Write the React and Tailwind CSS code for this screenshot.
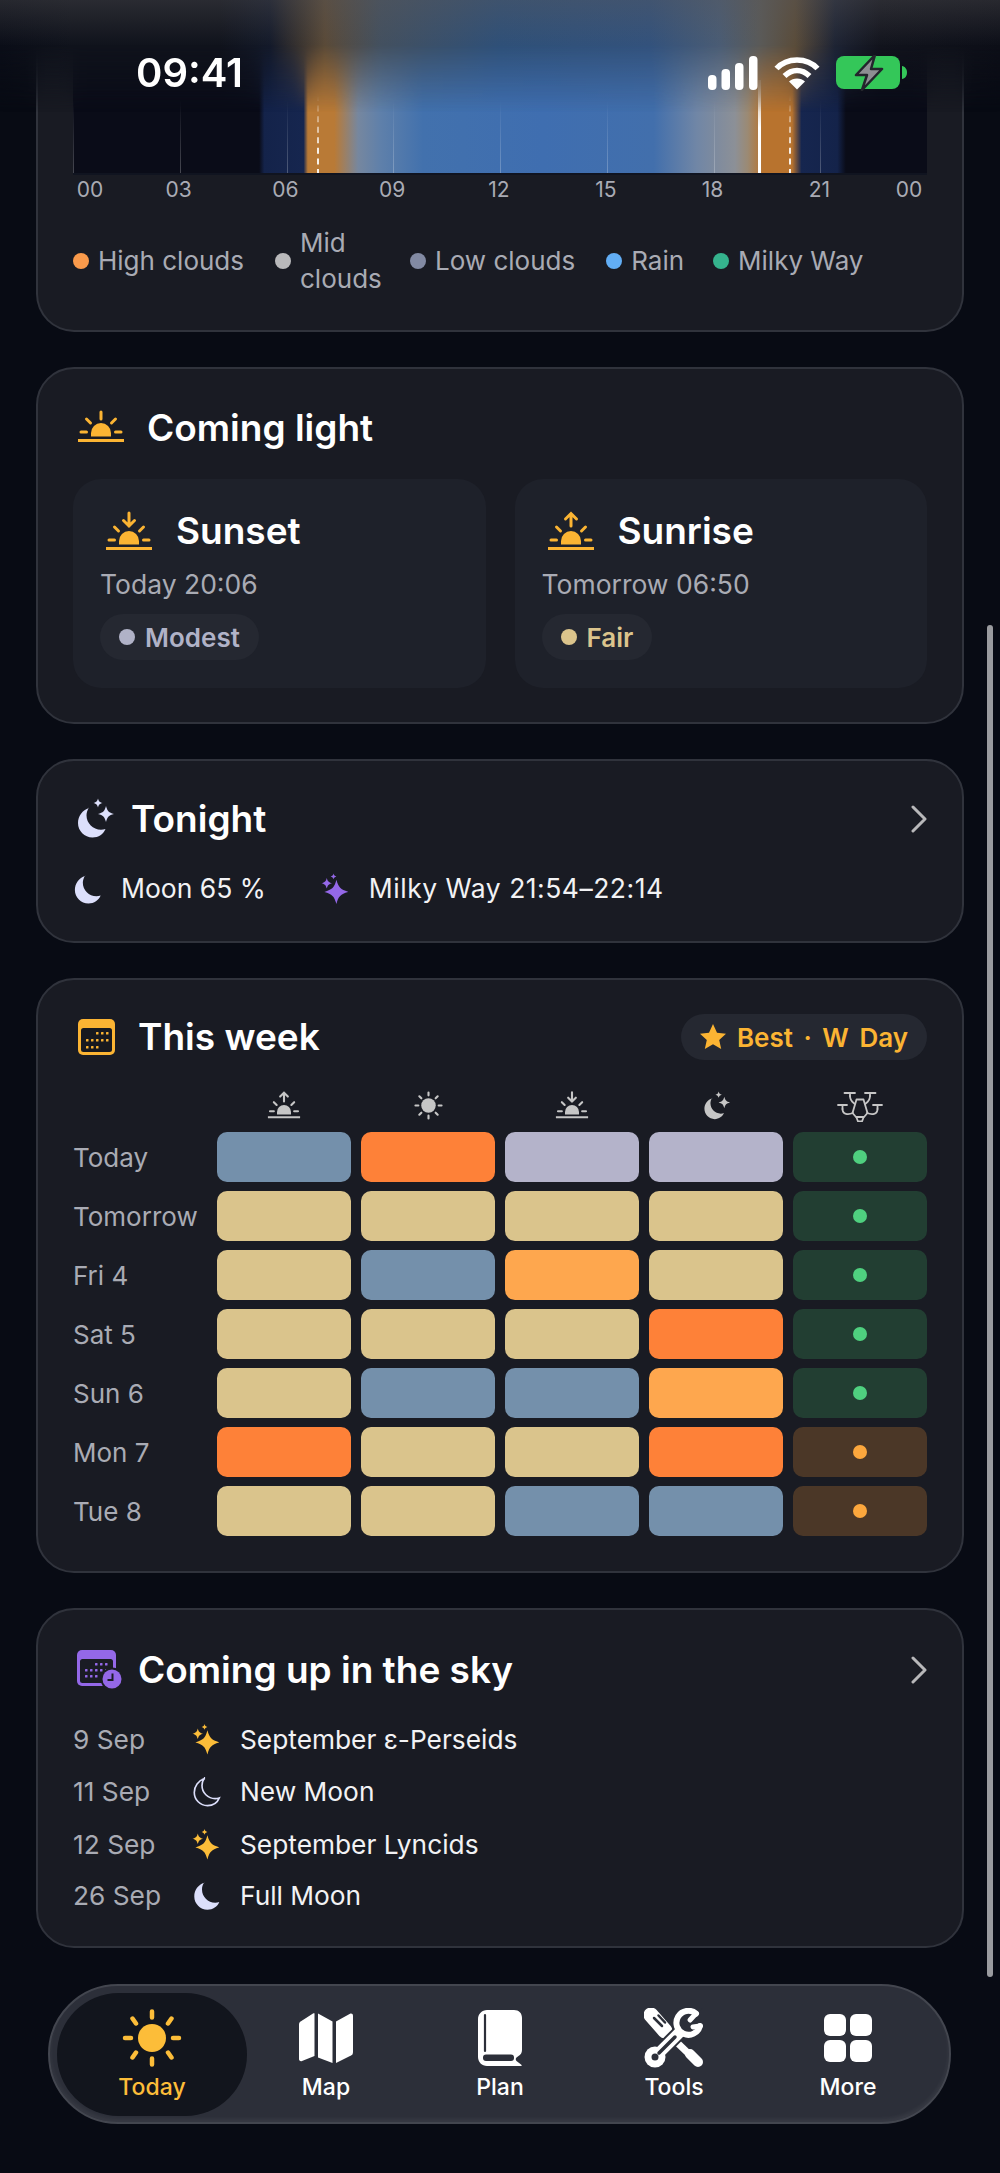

const Dome = ({ kind = "plain", color = "#fbb433", className = "" }) => (
  <svg viewBox="0 0 48 40" className={className} fill="none" stroke={color} strokeLinecap="round" strokeWidth="3">
    <path d="M1 37.500H47" strokeLinecap="butt" />
    <path d="M14 33.500v-3.500a10 10 0 0 1 20 0v3.500z" fill={color} stroke="none" />
    <path d="M4 29H9.500M38.500 29H44M9.500 16l4 4M38.500 16l-4 4" />
    {kind === "plain" && <path d="M24 9V16" />}
    {kind === "down" && <path d="M24 2V15M18.500 9.500L24 15l5.500-5.500" />}
    {kind === "up" && <path d="M24 15V2.500M18.500 8L24 2.500 29.500 8" />}
  </svg>
);

const Star4 = ({ cx, cy, r, fill }) => (
  <path fill={fill} d={`M${cx} ${cy - r}C${cx + r * 0.18} ${cy - r * 0.35} ${cx + r * 0.35} ${cy - r * 0.18} ${cx + r} ${cy}C${cx + r * 0.35} ${cy + r * 0.18} ${cx + r * 0.18} ${cy + r * 0.35} ${cx} ${cy + r}C${cx - r * 0.18} ${cy + r * 0.35} ${cx - r * 0.35} ${cy + r * 0.18} ${cx - r} ${cy}C${cx - r * 0.35} ${cy - r * 0.18} ${cx - r * 0.18} ${cy - r * 0.35} ${cx} ${cy - r}Z`} />
);

const Sparkles = ({ fill, className = "" }) => (
  <svg viewBox="0 0 28 32" className={className}>
    <Star4 cx={16} cy={19} r={12.5} fill={fill} />
    <Star4 cx={6} cy={10} r={5.5} fill={fill} />
    <Star4 cx={13} cy={3} r={3} fill={fill} />
  </svg>
);

const MOON = "M13 2C6.500 4 2 10 2 17c0 8 6.500 14.500 14.500 14.500 6 0 11-3.500 13-8.500-1.500.5-3 .8-4.500.8-8 0-14.500-6.500-14.500-14.500 0-2.500.8-5.300 2.500-7.800Z";

const MoonIcon = ({ className = "", fill = "#dcdffb" }) => (
  <svg viewBox="0 0 32 33" className={className}><path d={MOON} fill={fill} /></svg>
);

const MoonOutline = ({ className = "" }) => (
  <svg viewBox="0 0 32 33" className={className}><path d={MOON} fill="none" stroke="#dcdffb" strokeWidth="1.800" /></svg>
);

const MoonStars = ({ fill, className = "" }) => (
  <svg viewBox="0 0 38 42" className={className}>
    <g transform="translate(0 8)"><path d={MOON} fill={fill} /></g>
    <Star4 cx={30} cy={16} r={8} fill={fill} />
    <Star4 cx={22} cy={5} r={4.500} fill={fill} />
  </svg>
);

const SmallSun = ({ className = "" }) => (
  <svg viewBox="0 0 30 30" className={className} stroke="#c6c6c6" strokeWidth="2.200" strokeLinecap="round">
    <circle cx="15" cy="15" r="7.500" fill="#c6c6c6" stroke="none" />
    <path d="M15 1.500V4.500M15 25.500V28.500M1.500 15H4.500M25.500 15H28.500M5.500 5.500L7.600 7.600M24.500 5.500L22.400 7.600M5.500 24.500L7.600 22.400M24.500 24.500L22.400 22.400" />
  </svg>
);

const Drone = ({ className = "" }) => (
  <svg viewBox="0 0 46 31" className={className} fill="none" stroke="#c6c6c6" strokeWidth="1.800" strokeLinecap="round" strokeLinejoin="round">
    <path d="M7.500 2H18M28 2H38.500M13 2V5M33 2V5M1 14H10M36 14H45M5.500 14V18M40.500 14V18" />
    <path d="M13 5C13 10 15.500 11 18 13M33 5C33 10 30.500 11 28 13" />
    <path d="M5.500 18C5.500 23.500 11 24 16 22M40.500 18C40.500 23.500 35 24 30 22" />
    <path d="M19.500 8.500H26.500L30.500 22 27 26H19L15.500 22Z" />
    <path d="M19.500 26.500L21 30.500H25L26.500 26.500" />
  </svg>
);

const CalendarAmber = ({ className = "" }) => (
  <svg viewBox="0 0 37 36" className={className}>
    <rect width="37" height="36" rx="5" fill="#fbb433" />
    <rect x="3" y="9" width="31" height="24" rx="2.500" fill="#17191f" />
    <g fill="#fbb433">
      {[12, 19, 26].flatMap((y, r) => [8, 13, 18, 23, 28].filter((x, i) => !(r === 0 && i < 2) && !(r === 2 && i > 2)).map((x) => <rect key={`${x}${y}`} x={x} y={y + 1} width="2.500" height="2.500" rx="0.500" />))}
    </g>
  </svg>
);

const CalendarClock = ({ className = "" }) => (
  <svg viewBox="0 0 46 40" className={className}>
    <rect width="39" height="36" rx="5" fill="#9468e8" />
    <rect x="3" y="9" width="33" height="24" rx="2.500" fill="#1a1c24" />
    <g fill="#9468e8">
      {[13, 19, 25].flatMap((y, r) => [8, 13, 18, 23, 28].filter((x, i) => !(r === 0 && i < 2) && !(r === 2 && i > 2)).map((x) => <rect key={`${x}${y}`} x={x} y={y} width="2.500" height="2.500" rx="0.500" />))}
    </g>
    <circle cx="35" cy="29" r="11.500" fill="#1a1c24" />
    <circle cx="35" cy="29" r="9.500" fill="#9468e8" />
    <path d="M35.500 23.500V30H30.500" fill="none" stroke="#1a1c24" strokeWidth="2" />
  </svg>
);

const Chevron = () => (
  <svg viewBox="0 0 16 28" className="h-[28px] w-[16px]" fill="none" stroke="#b8b8ba" strokeWidth="3" strokeLinecap="round" strokeLinejoin="round">
    <path d="M2 2L14 14 2 26" />
  </svg>
);

const NavSun = () => (
  <svg viewBox="0 0 60 58" className="h-[58px] w-[60px]" stroke="#fcbd39" strokeWidth="4.500" strokeLinecap="round">
    <circle cx="30" cy="29" r="14" fill="#fcbd39" stroke="none" />
    <path d="M30 2.500V8.500M30 49.500V55.500M3 29H9M51 29H57M10.500 9.500L14 14.500M49.500 9.500L46 14.500M10.500 48.500L14 43.500M49.500 48.500L46 43.500" />
  </svg>
);
const NavMap = () => (
  <svg viewBox="0 0 54 50" className="h-[50px] w-[54px]" fill="#fff">
    <path d="M15.500 .5V43L3 48C1.300 48.600 0 47.600 0 46V11.500C0 10 .8 9 2 8.300L14 .6C14.600 .2 15.500 0 15.500 .5Z" />
    <path d="M19 .5L33.500 8.500V50L19 44.500Z" />
    <path d="M37 8.500L51 .8C52.500 0 54 1 54 2.500V39C54 40.800 53.200 42 52 42.600L37 50Z" />
  </svg>
);
const NavBook = () => (
  <svg viewBox="0 0 44 56" className="h-[56px] w-[44px]">
    <path fill="#fff" d="M9 0H36C41 0 44 3 44 8V40C44 43 42.500 45 40.500 46L38.500 47.500C37.500 48.500 37.500 50 38.500 51L43 54.500C44.200 55.500 43.800 56 42.500 56H9C4 56 0 52 0 47V9C0 4 4 0 9 0Z" />
    <path d="M7 5V41" stroke="#2c2f39" strokeWidth="2.200" strokeLinecap="round" />
    <rect x="5" y="44.500" width="31" height="6.500" rx="3" fill="#2c2f39" />
  </svg>
);
const NavTools = () => (
  <svg viewBox="0 0 60 60" className="h-[60px] w-[60px]" fill="none" strokeLinejoin="round">
    <path d="M7 7L21 23" stroke="#fff" strokeWidth="15" strokeLinecap="round" />
    <path d="M21 23L46 47" stroke="#fff" strokeWidth="7" />
    <path d="M46 46L54 54" stroke="#fff" strokeWidth="10" strokeLinecap="round" />
    <path d="M10 10L18 18M14.500 7.500L21 14.500" stroke="#2c2f39" strokeWidth="2.500" strokeLinecap="round" />
    <path d="M13 47L36 24" stroke="#2c2f39" strokeWidth="15" />
    <path d="M54.500 4.500A12.500 12.500 0 1 0 57.500 18" stroke="#2c2f39" strokeWidth="11" />
    <circle cx="11" cy="49" r="13" fill="#2c2f39" />
    <path d="M13 47L36 24" stroke="#fff" strokeWidth="11" />
    <circle cx="11" cy="49" r="10.500" fill="#fff" />
    <path d="M52 5.500A12 12 0 1 0 56 18" stroke="#fff" strokeWidth="6" strokeLinecap="round" />
    <path d="M52 5.500L46 12M56 18L49 19" stroke="#fff" strokeWidth="5" strokeLinecap="round" />
    <circle cx="11" cy="49" r="3.500" fill="#2c2f39" />
    <path d="M15 45L31 29" stroke="#2c2f39" strokeWidth="3.500" strokeLinecap="round" />
  </svg>
);
const NavMore = () => (
  <div className="grid h-[48px] w-[48px] grid-cols-2 grid-rows-2 gap-[4px]">
    <div className="rounded-[6px] bg-white" /><div className="rounded-[6px] bg-white" />
    <div className="rounded-[6px] bg-white" /><div className="rounded-[6px] bg-white" />
  </div>
);

const StatusIcons = () => (
  <div className="flex items-center">
    <svg viewBox="0 0 50 34" className="h-[34px] w-[50px]" fill="#fff">
      <rect x="0" y="19" width="8.500" height="15" rx="4" />
      <rect x="13.500" y="13" width="8.500" height="21" rx="4" />
      <rect x="27" y="7" width="8.500" height="27" rx="4" />
      <rect x="41" y="0" width="8.500" height="34" rx="4" />
    </svg>
    <svg viewBox="0 0 46 34" className="ml-[16px] h-[34px] w-[46px]" fill="none" stroke="#fff" strokeWidth="5.500">
      <path d="M2.500 12.500C13 1 33 1 43.500 12.500" />
      <path d="M10.500 20C18 12.500 28 12.500 35.500 20" />
      <path d="M23 33.500L15 25.500C19 21.500 27 21.500 31 25.500Z" fill="#fff" stroke="none" />
    </svg>
    <svg viewBox="0 0 72 36" className="ml-[16px] h-[36px] w-[72px]">
      <rect x="0" y="1" width="64" height="33" rx="8" fill="#34c759" />
      <path d="M66 11C69 11.500 71 14 71 17.500S69 23.500 66 24Z" fill="#34c759" />
      <path d="M39 0L20 20H31L26 35 46 14H35Z" fill="#8e8e93" stroke="#23252c" strokeWidth="2.500" strokeLinejoin="round" />
    </svg>
  </div>
);

const Card = ({ className = "", children }) => (
  <section className={`rounded-[38px] border-2 border-[#30333c] bg-[#191b23] ${className}`}>{children}</section>
);

const legend = [
  ["#f99a4b", "High clouds"],
  ["#b9b9bb", "Mid clouds"],
  ["#828aa3", "Low clouds"],
  ["#62aef5", "Rain"],
  ["#35b38d", "Milky Way"],
];

const hours = ["03", "06", "09", "12", "15", "18", "21"];
const gridLines = ["left-0", "left-[12.500%]", "left-[25%]", "left-[37.500%]", "left-[50%]", "left-[62.500%]", "left-[75%]", "left-[87.500%]"];

const Chart = () => (
  <div className="relative h-[175px] bg-[linear-gradient(90deg,#0a0c18_0%,#0a0c18_21.800%,#14234a_22.400%,#16264f_27%,#b97a36_27.500%,#b97a36_30.600%,#76879f_33.400%,#5f80aa_36%,#4271ad_41%,#3f6eb0_55%,#426fac_68%,#7086a6_73%,#8c9097_77.500%,#9b8a74_79%,#b8732e_80.800%,#b8732e_84.200%,#16264f_85.300%,#14234a_89.500%,#0a0c18_90.500%,#0a0c18_100%)]">
    {gridLines.map((c) => (
      <div key={c} className={`absolute bottom-0 top-[100px] w-px bg-gradient-to-b from-transparent to-white/25 ${c}`} />
    ))}
    <div className="absolute bottom-0 left-[28.600%] top-[95px] w-0 border-l-2 border-dashed border-white/90 [mask-image:linear-gradient(180deg,transparent,#000_70%)]" />
    <div className="absolute bottom-0 left-[83.800%] top-[95px] w-0 border-l-2 border-dashed border-white/90 [mask-image:linear-gradient(180deg,transparent,#000_70%)]" />
    <div className="absolute bottom-0 left-[80.200%] top-[80px] w-[3px] bg-gradient-to-b from-white/30 via-white to-white" />
    <div className="absolute bottom-0 left-0 right-0 h-[2px] bg-[#101420]" />
  </div>
);

const cellColors = {
  b: "bg-[#7490ab]",
  o: "bg-[#fe8138]",
  l: "bg-[#b4b3ca]",
  t: "bg-[#dac48c]",
  a: "bg-[#fea74e]",
};

const rows = [
  ["Today", ["b", "o", "l", "l"], "g"],
  ["Tomorrow", ["t", "t", "t", "t"], "g"],
  ["Fri 4", ["t", "b", "a", "t"], "g"],
  ["Sat 5", ["t", "t", "t", "o"], "g"],
  ["Sun 6", ["t", "b", "b", "a"], "g"],
  ["Mon 7", ["o", "t", "t", "o"], "y"],
  ["Tue 8", ["t", "t", "b", "b"], "y"],
];

const events = [
  ["9 Sep", <Sparkles fill="#fcbd39" className="h-[31px] w-[27px]" />, "September ε-Perseids", "h-[51px]"],
  ["11 Sep", <MoonOutline className="h-[30px] w-[30px]" />, "New Moon", "h-[54px]"],
  ["12 Sep", <Sparkles fill="#fcbd39" className="h-[31px] w-[27px]" />, "September Lyncids", "h-[51px]"],
  ["26 Sep", <MoonIcon className="h-[30px] w-[30px]" />, "Full Moon", "h-[51px]"],
];

const LightBox = ({ kind, title, time, pillColor, pillText, pillClass }) => (
  <div className="h-[209px] rounded-[28px] bg-[#1e212a] pl-[27px] pt-[30px]">
    <div className="flex h-[44px] items-center gap-[23px] pl-[5px]">
      <Dome kind={kind} className="h-[40px] w-[48px]" />
      <span className="text-[37px] font-[580] text-white">{title}</span>
    </div>
    <div className="mt-[13px] text-[26.500px] leading-[36px] text-[#a9abb4]">{time}</div>
    <div className={`mt-[12px] inline-flex h-[46px] items-center gap-[10px] rounded-full bg-[#252831] px-[19px] text-[26px] font-semibold ${pillClass}`}>
      <span className={`h-[16px] w-[16px] rounded-full ${pillColor}`} />
      {pillText}
    </div>
  </div>
);

const NavItem = ({ icon, label }) => (
  <div className="flex h-[123px] w-[174px] flex-col items-center pt-[14px]">
    <div className="flex h-[62px] items-center justify-center">{icon}</div>
    <span className="mt-[3px] text-[23px] font-medium leading-[30px] text-white">{label}</span>
  </div>
);

export default function App() {
  return (
    <div className="relative h-[2173px] w-[1000px] overflow-hidden bg-[#080b14] font-['Inter',sans-serif] text-white">
      <div className="flex flex-col gap-[35px] px-[36px]">
        <Card className="h-[332px] rounded-t-none border-t-0 px-[35px]">
          <Chart />
          <div className="mt-[1px] flex h-[28px] items-center justify-between text-[21px] leading-[28px] text-[#a9abb4]">
            <span className="w-[34px] text-center">00</span>
            <div className="flex">
              {hours.map((h) => (
                <span key={h} className="w-[106.800px] text-center">{h}</span>
              ))}
            </div>
            <span className="w-[36px] text-center">00</span>
          </div>
          <div className="mt-[21px] flex h-[72px] items-center text-[26px] leading-[36px] text-[#a9abb4]">
            {legend.map(([c, t], i) => (
              <div key={t} className={`flex items-center gap-[9px] ${i === 1 ? "ml-[31px] w-[106px]" : i === 0 ? "" : i === 3 ? "ml-[31px]" : "ml-[29px]"}`}>
                <span className="h-[16px] w-[16px] shrink-0 rounded-full" style={{ backgroundColor: c }} />
                <span className={i === 1 ? "w-[70px]" : "whitespace-nowrap"}>{t}</span>
              </div>
            ))}
          </div>
        </Card>

        <Card className="h-[357px] px-[35px]">
          <div className="flex h-[110px] items-center pt-[7px]">
            <div className="ml-[4px] flex h-[31px] w-[48px] items-end"><Dome kind="plain" className="h-[40px] w-[48px] shrink-0" /></div>
            <h2 className="ml-[22px] text-[37px] font-[580]">Coming light</h2>
          </div>
          <div className="grid grid-cols-2 gap-[29px]">
            <LightBox kind="down" title="Sunset" time="Today 20:06" pillColor="bg-[#b0b2c7]" pillText="Modest" pillClass="text-[#b0b2c7]" />
            <LightBox kind="up" title="Sunrise" time="Tomorrow 06:50" pillColor="bg-[#dbc48c]" pillText="Fair" pillClass="text-[#dbc48c]" />
          </div>
        </Card>

        <Card className="h-[184px] px-[35px]">
          <div className="flex h-[110px] items-center justify-between pt-[5px]">
            <div className="flex items-center gap-[17px]">
              <MoonStars fill="#dcdffb" className="ml-[3px] h-[42px] w-[38px]" />
              <h2 className="text-[37px] font-[580]">Tonight</h2>
            </div>
            <Chevron />
          </div>
          <div className="flex h-[36px] items-center text-[26.500px] text-[#f2f2f4]">
            <MoonIcon className="h-[31px] w-[30px]" />
            <span className="ml-[18px]">Moon 65 %</span>
            <Sparkles fill="#9468e8" className="ml-[55px] h-[34px] w-[27px]" />
            <span className="ml-[21px] tracking-[0.500px]">Milky Way 21:54–22:14</span>
          </div>
        </Card>

        <Card className="h-[595px] px-[35px]">
          <div className="flex h-[111px] items-center justify-between pt-[3px]">
            <div className="flex items-center gap-[23px]">
              <CalendarAmber className="ml-[5px] h-[36px] w-[37px]" />
              <h2 className="text-[37px] font-[580]">This week</h2>
            </div>
            <div className="flex h-[46px] items-center gap-[11px] rounded-full bg-[#252831] px-[19px] text-[26px] font-semibold text-[#fbb433] [word-spacing:4px]">
              <svg viewBox="0 0 26 26" className="h-[26px] w-[26px]" fill="#fbb433"><path d="M13 0l4 8.800 9 .9-6.800 6.200 2 9.100L13 20.300 4.800 25l2-9.100L0 9.700l9-.9z" /></svg>
              <span>Best · W Day</span>
            </div>
          </div>
          <div className="grid grid-cols-[134px_repeat(5,134px)] gap-x-[10px] gap-y-[9px]">
            <div className="h-[32px]" />
            <div className="flex h-[32px] items-start justify-center"><Dome kind="up" color="#c6c6c6" className="h-[28px] w-[34px]" /></div>
            <div className="flex h-[32px] items-start justify-center"><SmallSun className="h-[29px] w-[29px]" /></div>
            <div className="flex h-[32px] items-start justify-center"><Dome kind="down" color="#c6c6c6" className="h-[28px] w-[34px]" /></div>
            <div className="flex h-[32px] items-start justify-center"><MoonStars fill="#c6c6c6" className="h-[30px] w-[27px]" /></div>
            <div className="flex h-[32px] items-start justify-center"><Drone className="h-[31px] w-[46px]" /></div>
            {rows.map(([label, cells, status]) => (
              <div key={label} className="contents">
                <div className="flex h-[50px] items-center whitespace-nowrap text-[26px] text-[#a9abb4]">{label}</div>
                {cells.map((c, i) => (
                  <div key={i} className={`h-[50px] rounded-[10px] ${cellColors[c]}`} />
                ))}
                <div className={`flex h-[50px] items-center justify-center rounded-[10px] ${status === "g" ? "bg-[#223e32]" : "bg-[#4b3727]"}`}>
                  <span className={`h-[14px] w-[14px] rounded-full ${status === "g" ? "bg-[#4fd07f]" : "bg-[#fca73d]"}`} />
                </div>
              </div>
            ))}
          </div>
        </Card>

        <Card className="h-[340px] px-[35px]">
          <div className="flex h-[104px] items-center justify-between pt-[16px]">
            <div className="flex items-center gap-[15px]">
              <CalendarClock className="ml-[4px] h-[40px] w-[46px]" />
              <h2 className="text-[37px] font-[580]">Coming up in the sky</h2>
            </div>
            <Chevron />
          </div>
          <div className="flex flex-col">
            {events.map(([d, icon, t, h]) => (
              <div key={t} className={`flex items-center text-[26.300px] ${h}`}>
                <span className="w-[119px] text-[#a9abb4]">{d}</span>
                <span className="flex w-[48px] justify-start">{icon}</span>
                <span className="text-[#f2f2f4]">{t}</span>
              </div>
            ))}
          </div>
        </Card>
      </div>

      {/* status bar blur over the scrolled content */}
      <div className="absolute left-0 right-0 top-0 h-[112px] bg-[linear-gradient(180deg,rgba(90,88,90,0.35),rgba(90,88,90,0)_45px),linear-gradient(90deg,#0b0e18_0%,#10131c_7%,#10131c_22%,#141a2a_27%,#3a3430_30%,#5a4a38_32.500%,#43505f_38%,#2f5078_50%,#33527c_65%,#4a5c74_72%,#5a5a58_76%,#5a4c3a_79.500%,#1e2434_83.500%,#12141d_88%,#0d0f18_100%)] backdrop-blur-[8px] [mask-image:linear-gradient(180deg,#000_40%,transparent_100%)]" />
      <div className="absolute left-[136px] right-[92px] top-[53px] flex h-[40px] items-center justify-between">
        <span className="text-[40px] font-semibold leading-[40px] text-white">09:41</span>
        <StatusIcons />
      </div>

      {/* overlay scrollbar */}
      <div className="absolute left-[987px] top-[625px] h-[1352px] w-[6px] rounded-full bg-[#9a9b9f]" />

      {/* floating tab bar */}
      <nav className="absolute left-[48px] top-[1984px] flex h-[140px] w-[903px] items-center rounded-[70px] border-2 border-[#43464f] bg-[#2c2f39] pl-[7px] shadow-[inset_0_-3px_4px_rgba(255,255,255,0.06)]">
        <div className="flex h-[123px] w-[190px] flex-col items-center rounded-[62px] bg-[#12151d] pt-[14px]">
          <div className="flex h-[62px] items-center justify-center"><NavSun /></div>
          <span className="mt-[3px] text-[23px] font-medium leading-[30px] text-[#fcbd39]">Today</span>
        </div>
        <div className="-ml-[8px] flex">
          <NavItem icon={<NavMap />} label="Map" />
          <NavItem icon={<NavBook />} label="Plan" />
          <NavItem icon={<NavTools />} label="Tools" />
          <NavItem icon={<NavMore />} label="More" />
        </div>
      </nav>
    </div>
  );
}
